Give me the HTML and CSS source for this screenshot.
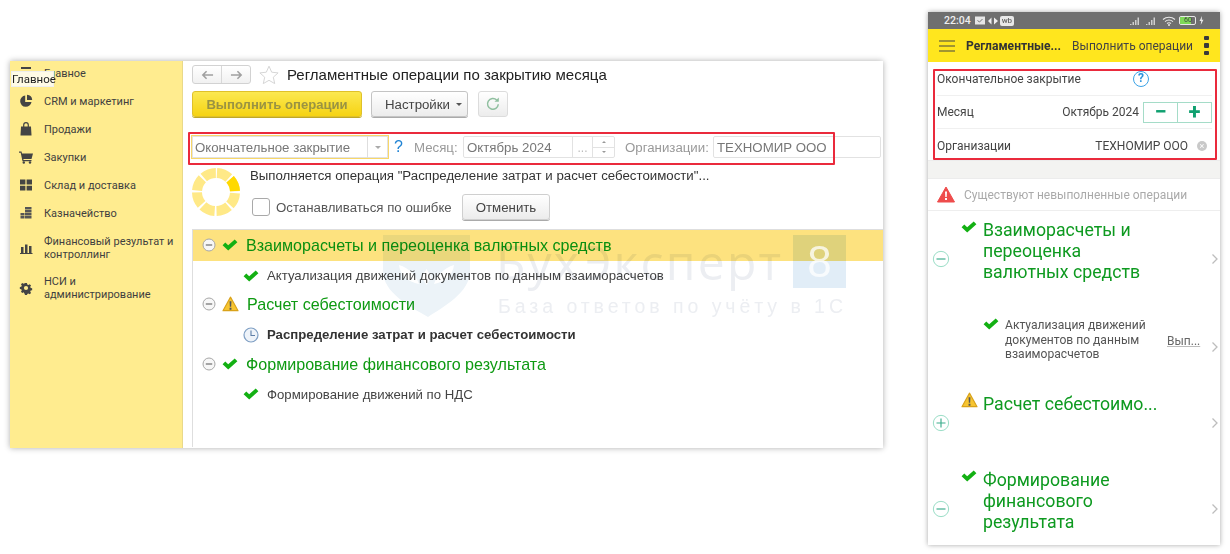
FILE: index.html
```html
<!DOCTYPE html>
<html lang="ru">
<head>
<meta charset="utf-8">
<title>Регламентные операции</title>
<link rel="stylesheet" href="styles.css">
</head>
<body>
<svg class="defs" xmlns="http://www.w3.org/2000/svg">
  <symbol id="check" viewBox="0 0 16 12"><path d="M.6 6.300 3.300 3.500 6.200 6.200 12.700.6 15.400 3.300 6.200 11.600z" fill="#13b013"/></symbol>
  <symbol id="warn" viewBox="0 0 18 17"><path d="M9 1.200 17 15.600H1z" fill="#f7c531" stroke="#d9a21a" stroke-width="1.200" stroke-linejoin="round"/><path d="M8 5.500h2l-.3 6H8.300zM8 12.500h2v2H8z" fill="#555"/></symbol>
  <symbol id="minus-s" viewBox="0 0 14 14"><circle cx="7" cy="7" r="6" fill="#f7f7f7" stroke="#a8a8a8"/><path d="M3.800 7h6.400" stroke="#777" stroke-width="1.300"/></symbol>
  <symbol id="minus-m" viewBox="0 0 20 20"><circle cx="10" cy="10" r="8.500" fill="#fff" stroke="#8fd9c0"/><path d="M5 10h10" stroke="#3cae8d" stroke-width="1.300"/></symbol>
  <symbol id="plus-m" viewBox="0 0 20 20"><circle cx="10" cy="10" r="8.500" fill="#fff" stroke="#8fd9c0"/><path d="M5 10h10M10 5v10" stroke="#3cae8d" stroke-width="1.300"/></symbol>
  <symbol id="chev" viewBox="0 0 8 12"><path d="M1.500 1.500 6 6l-4.500 4.500" fill="none" stroke="#bdbdbd" stroke-width="1.300"/></symbol>
</svg>

<main class="desktop">
  <section class="win">
    <nav class="side">
      <div class="side-item">
        <svg class="side-ic" viewBox="0 0 14 14"><path d="M2 1h10v2H2zM2 5h10v2H2zM2 9h10v2H2z" fill="#444"/></svg>
        <span>Главное</span>
      </div>
      <div class="side-item">
        <svg class="side-ic" viewBox="0 0 14 14"><path d="M6.200 1.500A5.700 5.700 0 1 0 12.500 8H6.200z" fill="#444"/><path d="M8 .8A5.500 5.500 0 0 1 13.200 6H8z" fill="#444"/></svg>
        <span>CRM и маркетинг</span>
      </div>
      <div class="side-item">
        <svg class="side-ic" viewBox="0 0 14 14"><path d="M2 4.500h10l.5 9h-11z" fill="#444"/><path d="M4.700 5V3a2.300 2.300 0 0 1 4.600 0v2" fill="none" stroke="#444" stroke-width="1.200"/></svg>
        <span>Продажи</span>
      </div>
      <div class="side-item">
        <svg class="side-ic" viewBox="0 0 14 14"><path d="M0 1.500h2.500L3 3.500h11l-1.500 5.500H4.300l.3 1H12.500v1.200H3.500L1.700 2.700H0z" fill="#444"/><circle cx="4.800" cy="12.500" r="1.200" fill="#444"/><circle cx="11" cy="12.500" r="1.200" fill="#444"/></svg>
        <span>Закупки</span>
      </div>
      <div class="side-item">
        <svg class="side-ic" viewBox="0 0 14 14"><path d="M1 1.500h5.400v5H1zM7.600 1.500H13v5H7.600zM1 7.700h5.400v4.800H1zM7.600 7.700H13v4.800H7.600z" fill="#444"/></svg>
        <span>Склад и доставка</span>
      </div>
      <div class="side-item">
        <svg class="side-ic" viewBox="0 0 14 14"><path d="M6 1h6.500v2.400H6zM6 4h6.500v2.400H6zM6 7h6.500v2.400H6zM6 10h6.500v2.400H6zM1.500 7h4v2.400h-4zM1.500 10h4v2.400h-4z" fill="#555"/></svg>
        <span>Казначейство</span>
      </div>
      <div class="side-item side-two">
        <svg class="side-ic" viewBox="0 0 14 14"><path d="M2 6h2.500v6H2zM6 3.500h2.500V12H6zM10 5h2.500v7H10zM1 12h12.500v1H1z" fill="#444"/></svg>
        <span>Финансовый результат и контроллинг</span>
      </div>
      <div class="side-item side-two side-last">
        <svg class="side-ic" viewBox="0 0 14 14"><path d="M5.800.8h2.400l.4 1.800 1.400.6 1.600-1 1.700 1.700-1 1.600.6 1.400 1.800.4v2.400l-1.800.4-.6 1.400 1 1.600-1.700 1.700-1.600-1-1.400.6-.4 1.800H5.800l-.4-1.800L4 12.300l-1.600 1-1.700-1.700 1-1.600-.6-1.400L-.7 8.200V5.800l1.800-.4.600-1.400-1-1.600 1.700-1.700 1.600 1 1.400-.6z" transform="translate(1.400 1.400) scale(.8)" fill="#444"/><circle cx="7" cy="7" r="2.100" fill="#ffec8f"/></svg>
        <span>НСИ и администрирование</span>
      </div>
    </nav>

    <div class="main">
      <header class="title-row">
        <div class="nav-btns">
          <button class="nav-btn"><svg viewBox="0 0 14 10" class="arrow"><path d="M13 5H2M6 1 2 5l4 4" fill="none" stroke="#a0a0a0" stroke-width="1.700"/></svg></button>
          <button class="nav-btn"><svg viewBox="0 0 14 10" class="arrow"><path d="M1 5h11M8 1l4 4-4 4" fill="none" stroke="#a0a0a0" stroke-width="1.700"/></svg></button>
        </div>
        <svg class="star" viewBox="0 0 20 20"><path d="M10 1.200l2.700 6 6.400.7-4.800 4.300 1.400 6.400L10 15.300l-5.700 3.300 1.400-6.400L.9 7.900l6.400-.7z" fill="#fff" stroke="#d6d6d6"/></svg>
        <h1>Регламентные операции по закрытию месяца</h1>
      </header>

      <div class="tool-row">
        <button class="btn btn-primary">Выполнить операции</button>
        <button class="btn btn-settings">Настройки<i class="caret"></i></button>
        <button class="btn btn-refresh"><svg viewBox="0 0 16 16"><path d="M13.300 8.300A5.400 5.400 0 1 1 11.700 4" fill="none" stroke="#8fbf9f" stroke-width="1.500"/><path d="M13.800 1.500v4.300H9.500z" fill="#8fbf9f"/></svg></button>
      </div>

      <div class="field-row">
        <div class="combo"><span class="combo-text">Окончательное закрытие</span><span class="combo-btn"><i class="caret caret-light"></i></span></div>
        <span class="help">?</span>
        <label class="flabel flabel-month">Месяц:</label>
        <div class="month">
          <span class="month-text">Октябрь 2024</span>
          <span class="month-dots">...</span>
          <span class="month-spin"><i class="spin-up"></i><i class="spin-down"></i></span>
        </div>
        <label class="flabel flabel-org">Организации:</label>
        <div class="org"><span>ТЕХНОМИР ООО</span></div>
      </div>

      <div class="progress">
        <svg class="ring" viewBox="0 0 48 48">
          <circle class="ring-all" cx="24" cy="24" r="19"/>
          <circle class="ring-on" cx="24" cy="24" r="19"/>
        </svg>
        <div class="progress-body">
          <p class="progress-text">Выполняется операция "Распределение затрат и расчет себестоимости"...</p>
          <div class="progress-ctrl">
            <span class="checkbox"></span>
            <span class="check-label">Останавливаться по ошибке</span>
            <button class="btn btn-cancel">Отменить</button>
          </div>
        </div>
      </div>

      <div class="tree">
        <div class="t-row t-group t-active"><svg class="t-tog"><use href="#minus-s"/></svg><svg class="t-chk"><use href="#check"/></svg><span>Взаиморасчеты и переоценка валютных средств</span></div>
        <div class="t-row t-child"><svg class="t-chk"><use href="#check"/></svg><span>Актуализация движений документов по данным взаиморасчетов</span></div>
        <div class="t-row t-group"><svg class="t-tog"><use href="#minus-s"/></svg><svg class="t-warn"><use href="#warn"/></svg><span>Расчет себестоимости</span></div>
        <div class="t-row t-child t-bold"><svg class="t-clock" viewBox="0 0 16 16"><circle cx="8" cy="8" r="7" fill="#eef3f9" stroke="#7f9fc4" stroke-width="1.200"/><path d="M8 3.500V8.500H12" fill="none" stroke="#5f7fa8" stroke-width="1.100"/></svg><span>Распределение затрат и расчет себестоимости</span></div>
        <div class="t-row t-group"><svg class="t-tog"><use href="#minus-s"/></svg><svg class="t-chk"><use href="#check"/></svg><span>Формирование финансового результата</span></div>
        <div class="t-row t-child"><svg class="t-chk"><use href="#check"/></svg><span>Формирование движений по НДС</span></div>
      </div>

      <div class="watermark">
        <svg class="wm-shield" viewBox="0 0 87 82"><path d="M0 0h87v36C87 58 60 72 45 82 28 72 0 58 0 36z" fill="#ecf3f8"/><path d="M16 30c10 3 17 10 20 19-11-2-19-9-20-19zM71 30c-10 3-17 10-20 19 11-2 19-9 20-19zM43.500 34l5 8-5 8-5-8z" fill="#fff"/></svg>
        <span class="wm-name">БухЭксперт</span>
        <span class="wm-eight"></span>
        <span class="wm-sub">База ответов по учёту в 1С</span>
      </div>
      <span class="wm-digit">8</span>
    </div>

    <div class="tooltip">Главное</div>
    <div class="redbox redbox-desk"></div>
  </section>

  <section class="phone">
    <div class="status">
      <span class="status-time">22:04</span>
      <svg class="st-ic" viewBox="0 0 12 12"><path d="M1 1.500h10v8H1z" fill="#e6e6e6"/><path d="M3.500 5.500l2 1.500 3-3" fill="none" stroke="#777"/></svg>
      <svg class="st-ic" viewBox="0 0 12 12"><path d="M1 6l3.500-3.500V9.500zM7 2.500 11 6 7 9.500z" fill="#eee"/></svg>
      <span class="st-wb">wb</span>
      <span class="st-gap"></span>
      <svg class="st-sig" viewBox="0 0 11 10"><path d="M0 9h1.500V8H0zM2.500 9H4V6H2.500zM5 9h1.500V4H5zM7.500 9H9V1.500H7.500z" fill="#cfcfcf"/></svg>
      <svg class="st-sig" viewBox="0 0 11 10"><path d="M0 9h1.500V8H0zM2.500 9H4V6H2.500zM5 9h1.500V4H5zM7.500 9H9V1.500H7.500z" fill="#cfcfcf"/></svg>
      <svg class="st-wifi" viewBox="0 0 14 10"><path d="M1 3.500C4.500.5 9.500.5 13 3.500M3 5.600c2.500-2 5.500-2 8 0M5 7.500c1.300-.9 2.700-.9 4 0" fill="none" stroke="#e8e8e8" stroke-width="1.100"/><circle cx="7" cy="9" r="1" fill="#e8e8e8"/></svg>
      <span class="st-bat"><i class="st-bat-fill"></i><b>60</b></span>
      <svg class="st-bolt" viewBox="0 0 5 9"><path d="M3 0 .5 5h1.700L1.700 9 4.500 3.800H2.800z" fill="#e8e8e8"/></svg>
    </div>

    <header class="p-head">
      <svg class="p-burger" viewBox="0 0 16 12"><path d="M0 1h16M0 6h16M0 11h16" stroke="#444" stroke-width="1.200"/></svg>
      <strong class="p-title">Регламентные...</strong>
      <span class="p-action">Выполнить операции</span>
      <span class="p-more"><i></i><i></i><i></i></span>
    </header>

    <div class="p-form">
      <div class="p-frow p-frow-line">
        <span class="p-flabel p-flabel-wide">Окончательное закрытие</span>
        <span class="p-help">?</span>
      </div>
      <div class="p-frow p-frow-line">
        <span class="p-flabel">Месяц</span>
        <span class="p-val">Октябрь 2024</span>
        <span class="p-step"><b>−</b><b>+</b></span>
      </div>
      <div class="p-frow">
        <span class="p-flabel">Организации</span>
        <span class="p-val">ТЕХНОМИР ООО</span>
        <span class="p-clear">×</span>
      </div>
    </div>

    <div class="p-strip"></div>

    <div class="p-warn">
      <svg class="p-warn-ic" viewBox="0 0 18 17"><path d="M9 1 17.500 16H.5z" fill="#ee4c4c" stroke="#ee4c4c" stroke-linejoin="round"/><path d="M8 5.500h2l-.3 5.500H8.300zM8 12h2v2H8z" fill="#fff"/></svg>
      <span>Существуют невыполненные операции</span>
    </div>

    <div class="p-tree">
      <div class="p-row p-row1">
        <svg class="p-tog"><use href="#minus-m"/></svg>
        <svg class="p-chk"><use href="#check"/></svg>
        <span class="p-gtext">Взаиморасчеты и<br>переоценка<br>валютных средств</span>
        <svg class="p-chev"><use href="#chev"/></svg>
      </div>
      <div class="p-row p-row2">
        <svg class="p-chk p-chk-child"><use href="#check"/></svg>
        <span class="p-ctext">Актуализация движений<br>документов по данным<br>взаиморасчетов</span>
        <span class="p-link">Вып...</span>
        <svg class="p-chev"><use href="#chev"/></svg>
      </div>
      <div class="p-row p-row3">
        <svg class="p-tog"><use href="#plus-m"/></svg>
        <svg class="p-wrn"><use href="#warn"/></svg>
        <span class="p-gtext">Расчет себестоимо...</span>
        <svg class="p-chev"><use href="#chev"/></svg>
      </div>
      <div class="p-row p-row4">
        <svg class="p-tog"><use href="#minus-m"/></svg>
        <svg class="p-chk"><use href="#check"/></svg>
        <span class="p-gtext">Формирование<br>финансового<br>результата</span>
        <svg class="p-chev"><use href="#chev"/></svg>
      </div>
    </div>
    <div class="redbox redbox-phone"></div>
  </section>
</main>
</body>
</html>
```

FILE: styles.css
```css
* { box-sizing: border-box; }
html, body { margin: 0; padding: 0; background: #fff; }
body { width: 1230px; height: 554px; overflow: hidden; font-family: "Liberation Sans", Arial, sans-serif; color: #333; }
.defs { display: none; }
svg { display: block; flex: none; }
button { font: inherit; margin: 0; padding: 0; }
h1, p { margin: 0; font-weight: normal; }

.desktop { display: flex; align-items: flex-start; padding: 12px 0 0 10px; filter: blur(.35px); }

/* Desktop window */
.win { position: relative; display: flex; width: 873px; height: 387px; margin-top: 49px; background: #fff; box-shadow: 0 0 6px rgba(0,0,0,.32); overflow: hidden; }
.side { width: 173px; flex: none; background: #ffec8f; border-right: 1px solid #e9d98a; font-family: Roboto, sans-serif; font-size: 11px; line-height: 13px; color: #3f3f3f; }
.side-item { display: flex; align-items: center; height: 28px; padding-left: 9px; }
.side-item span { margin-left: 11px; width: 135px; }
.side-ic { width: 14px; height: 14px; }
.side-item:first-child { margin-top: -2px; }
.side-two { height: 30px; margin-top: 6px; }
.side-last { margin-top: 10px; }
.side-last span { width: 128px; }

.main { position: relative; flex: 1; padding-left: 9px; min-width: 0; }
.title-row { display: flex; align-items: center; height: 19px; margin-top: 4px; }
.nav-btns { display: flex; width: 59px; height: 19px; border: 1px solid #d2d2d2; border-radius: 3px; background: linear-gradient(#fff,#f1f1f1); }
.nav-btn { flex: 1; border: 0; background: none; display: flex; align-items: center; justify-content: center; }
.nav-btn + .nav-btn { border-left: 1px solid #d8d8d8; }
.arrow { width: 13px; height: 10px; }
.star { width: 20px; height: 20px; margin: 0 8px 0 8px; }
h1 { font-size: 15px; color: #222; white-space: nowrap; }

.tool-row { display: flex; margin-top: 7px; height: 26px; }
.btn { border: 1px solid #c4c4c4; border-radius: 3px; background: linear-gradient(#fff,#ececec); box-shadow: 0 1px 0 #aaa; color: #444; font-size: 13.250px; }
.btn-primary { width: 170px; background: linear-gradient(#fbe851,#f6d313); border-color: #dfc12a; color: #9a9342; font-weight: bold; font-size: 13.100px; box-shadow: 0 1px 0 #bfa728; }
.btn-settings { width: 97px; margin-left: 9px; padding-left: 8px; display: flex; align-items: center; justify-content: center; }
.caret { display: inline-block; width: 0; height: 0; margin-left: 6px; border: 3px solid transparent; border-top-color: #555; border-bottom: 0; }
.caret-light { border-top-color: #aaa; margin: 0; }
.btn-refresh { width: 30px; margin-left: 10px; display: flex; align-items: center; justify-content: center; box-shadow: none; border-color: #dcdcdc; }
.btn-refresh svg { width: 16px; height: 16px; }

.field-row { display: flex; align-items: center; height: 24px; margin-top: 18px; margin-left: -1px; font-size: 13.250px; color: #777; }
.combo { display: flex; width: 198px; height: 24px; border: 1px solid #f8d768; box-shadow: inset 0 0 0 1px #e2e2e2; }
.combo-text { flex: 1; padding: 4px 0 0 3px; color: #777; }
.combo-btn { width: 21px; display: flex; align-items: center; justify-content: center; border-left: 1px solid #dedede; }
.help { width: 25px; text-align: center; color: #1f83d4; font-size: 16px; margin-left: -3px; }
.flabel { color: #999; white-space: nowrap; }
.flabel-month { margin-left: 3px; width: 49px; }
.month { display: flex; width: 152px; height: 22px; border: 1px solid #e2e2e2; border-radius: 2px; align-items: center; color: #777; }
.month-text { width: 108px; padding-left: 3px; }
.month-dots { width: 21px; height: 100%; border-left: 1px solid #e2e2e2; border-right: 1px solid #e2e2e2; text-align: center; color: #bbb; font-size: 12px; line-height: 22px; }
.month-spin { flex: 1; height: 100%; display: flex; flex-direction: column; }
.spin-up, .spin-down { flex: 1; display: flex; align-items: center; justify-content: center; }
.spin-up { border-bottom: 1px solid #e2e2e2; }
.spin-up::after { content: ""; border: 2px solid transparent; border-bottom-color: #999; border-top: 0; }
.spin-down::after { content: ""; border: 2px solid transparent; border-top-color: #999; border-bottom: 0; }
.flabel-org { margin-left: 10px; width: 88px; }
.org { flex: 1; height: 22px; border: 1px solid #e2e2e2; border-radius: 2px; color: #777; padding: 3px 0 0 3px; margin-right: 2px; }

.progress { display: flex; margin-top: 9px; height: 52px; }
.ring { width: 48px; height: 48px; }
.ring circle { fill: none; stroke-width: 10; }
.ring-all { stroke: #ffe987; stroke-dasharray: 13 1.920; transform: rotate(-87.100deg); transform-origin: 24px 24px; }
.ring-on { stroke: #ffd900; stroke-dasharray: 13 106.380; transform: rotate(-42.100deg); transform-origin: 24px 24px; }
.progress-body { margin-left: 10px; }
.progress-text { font-size: 13.250px; color: #333; line-height: 16px; }
.progress-ctrl { display: flex; align-items: center; margin-top: 10px; padding-left: 2px; }
.checkbox { width: 18px; height: 18px; border: 1px solid #a9a9a9; border-radius: 3px; background: #fff; }
.check-label { margin-left: 6px; width: 186px; font-size: 13.250px; color: #555; }
.btn-cancel { width: 88px; height: 26px; border-color: #cfcfcf; }

.tree { margin-top: 9px; height: 218px; border-top: 1px solid #dedede; border-left: 1px solid #dedede; font-size: 13.200px; }
.t-row { display: flex; align-items: center; height: 30px; white-space: nowrap; }
.t-group { height: 29.500px; font-size: 16.100px; color: #0e9a12; padding-left: 9px; }
.t-active { height: 31px; background: #fde27f; color: #0a8f10; }
.t-active + .t-child { height: 29px; }
.t-tog { width: 14px; height: 14px; margin-top: -1px; }
.t-chk { width: 16px; height: 12px; }
.t-group .t-chk { margin: -1px 8px 0 6px; }
.t-warn { width: 17px; height: 16px; margin: -2px 8px 0 6px; }
.t-child { padding-left: 50px; color: #444; }
.t-child .t-chk { margin-right: 8px; }
.t-clock { width: 16px; height: 16px; margin: 0 8px 0 0; }
.t-bold { font-weight: bold; color: #333; }

.watermark { position: absolute; left: 200px; top: 174px; width: 470px; height: 100px; mix-blend-mode: multiply; pointer-events: none; }
.wm-shield { position: absolute; left: 0; top: 0; width: 87px; height: 82px; }
.wm-name { position: absolute; left: 113px; top: 0; font-size: 48px; line-height: 54px; color: #eceef2; white-space: nowrap; letter-spacing: 2.200px; font-family: "Open Sans", sans-serif; }
.wm-eight { position: absolute; left: 410px; top: 0; width: 53px; height: 53px; background: #e1edf7; }
.wm-sub { position: absolute; left: 115px; top: 60px; font-size: 19.500px; letter-spacing: 3.950px; color: #eceef2; white-space: nowrap; }
.wm-digit { position: absolute; left: 610px; top: 174px; width: 53px; height: 53px; color: rgba(255,255,255,.75); font-size: 44px; line-height: 53px; text-align: center; pointer-events: none; }

.tooltip { position: absolute; left: 1px; top: 10px; width: 43px; height: 16px; background: #fffbe6; border: 1px solid #eee; font-size: 11.500px; line-height: 14px; color: #222; text-align: center; font-family: Roboto, sans-serif; }
.redbox { position: absolute; border: 2px solid #ea2a3c; border-radius: 1px; pointer-events: none; }
.redbox-desk { left: 178px; top: 71px; width: 647px; height: 33px; }
.redbox-phone { left: 5px; top: 57px; width: 284px; height: 91px; }

/* Phone */
.phone { position: relative; width: 292px; height: 533px; margin-left: 45px; background: #fff; box-shadow: 0 0 5px rgba(0,0,0,.35); font-family: Roboto, sans-serif; overflow: hidden; }
.status { display: flex; align-items: center; height: 17px; background: #6f6f6f; color: #eee; font-size: 10.500px; padding: 0 16px 0 16px; font-weight: 500; }
.status-time { margin-right: 3px; }
.st-ic { width: 12px; height: 12px; margin-right: 1px; }
.st-wb { background: #e8e8e8; color: #666; font-size: 8px; line-height: 10px; padding: 0 2px; border-radius: 2px; }
.st-gap { flex: 1; }
.st-sig { width: 11px; height: 10px; margin-right: 5px; }
.st-wifi { width: 14px; height: 10px; margin: 0 3px 0 0; }
.st-bat { position: relative; display: block; width: 17px; height: 9px; border: 1px solid #e8e8e8; border-radius: 2px; overflow: hidden; }
.st-bat-fill { position: absolute; left: 0; top: 0; bottom: 0; width: 11px; background: #7ed957; }
.st-bat b { position: absolute; left: 4px; top: -1px; font-size: 7px; line-height: 9px; color: #444; font-weight: normal; }
.st-bolt { width: 5px; height: 9px; margin-left: 3px; }

.p-head { display: flex; align-items: center; height: 33px; background: #ffe61e; padding: 0 11px; }
.p-burger { width: 16px; height: 12px; }
.p-title { margin-left: 11px; font-size: 12.100px; color: #333; font-weight: 700; white-space: nowrap; }
.p-action { margin-left: auto; font-size: 12px; color: #444; white-space: nowrap; }
.p-more { display: flex; flex-direction: column; gap: 3px; margin-left: 11px; width: 5px; }
.p-more i { display: block; width: 4.500px; height: 4.500px; border-radius: 1px; background: #3a3a3a; }

.p-form { padding: 0 8px 0 9px; height: 99px; border-bottom: 1px solid #ececec; }
.p-frow { display: flex; align-items: center; height: 33px; font-size: 12px; color: #444; }
.p-frow-line { border-bottom: 1px solid #f0f0f0; }
.p-frow:first-child { height: 34px; }
.p-flabel { color: #444; }
.p-flabel-wide { width: 196px; }
.p-help { width: 16px; height: 16px; border: 1.500px solid #3aa2e6; border-radius: 50%; color: #2a93dc; font-size: 12px; font-weight: 700; line-height: 13px; text-align: center; }
.p-val { margin-left: auto; color: #444; white-space: nowrap; }
.p-step { display: flex; margin-left: 4px; width: 69px; height: 21px; border: 1px solid #a5dcc8; }
.p-step b { flex: 1; text-align: center; color: #10a070; font-size: 22px; line-height: 18px; font-weight: 700; }
.p-step b + b { border-left: 1px solid #a5dcc8; }
.p-clear { width: 10px; height: 10px; margin: 0 5px 0 9px; background: #c9c9c9; border-radius: 50%; color: #fff; font-size: 9px; line-height: 10px; text-align: center; }
.p-strip { height: 18px; background: #f3f3f1; border-bottom: 1px solid #ececec; }
.p-warn { display: flex; align-items: center; height: 32px; padding-left: 9px; border-bottom: 1px solid #eee; font-size: 12px; color: #aaa; }
.p-warn-ic { width: 18px; height: 17px; margin-right: 9px; }

.p-row { position: relative; display: grid; align-items: center; }
.p-tog { position: absolute; left: 4px; top: 50%; width: 18px; height: 18px; margin-top: -9px; }
.p-chev { position: absolute; right: 1px; top: 50%; width: 8px; height: 12px; margin-top: -6px; }
.p-chk { position: absolute; left: 33px; width: 16px; height: 12px; }
.p-wrn { position: absolute; left: 33px; top: 5px; width: 17px; height: 16px; }
.p-gtext { display: block; margin-left: 55px; font-size: 17.700px; line-height: 21px; color: #0e9a20; white-space: nowrap; }
.p-row1 { height: 96px; align-items: start; padding-top: 9px; }
.p-row1 .p-chk { top: 10px; }
.p-row2 { height: 80px; align-items: start; padding-top: 11px; }
.p-chk-child { left: 55px; top: 11px; }
.p-ctext { margin-left: 77px; font-size: 12.100px; line-height: 14.500px; color: #555; white-space: nowrap; }
.p-link { position: absolute; left: 239px; top: 27px; font-size: 12px; color: #666; text-decoration: underline; text-decoration-color: #bbb; }
.p-row3 { height: 72px; align-items: start; padding-top: 7px; }
.p-row4 { height: 72px; margin-top: 14px; align-items: start; }
.p-row4 .p-chk { top: -3px; }
.p-row4 .p-gtext { margin-top: -3px; }
```
